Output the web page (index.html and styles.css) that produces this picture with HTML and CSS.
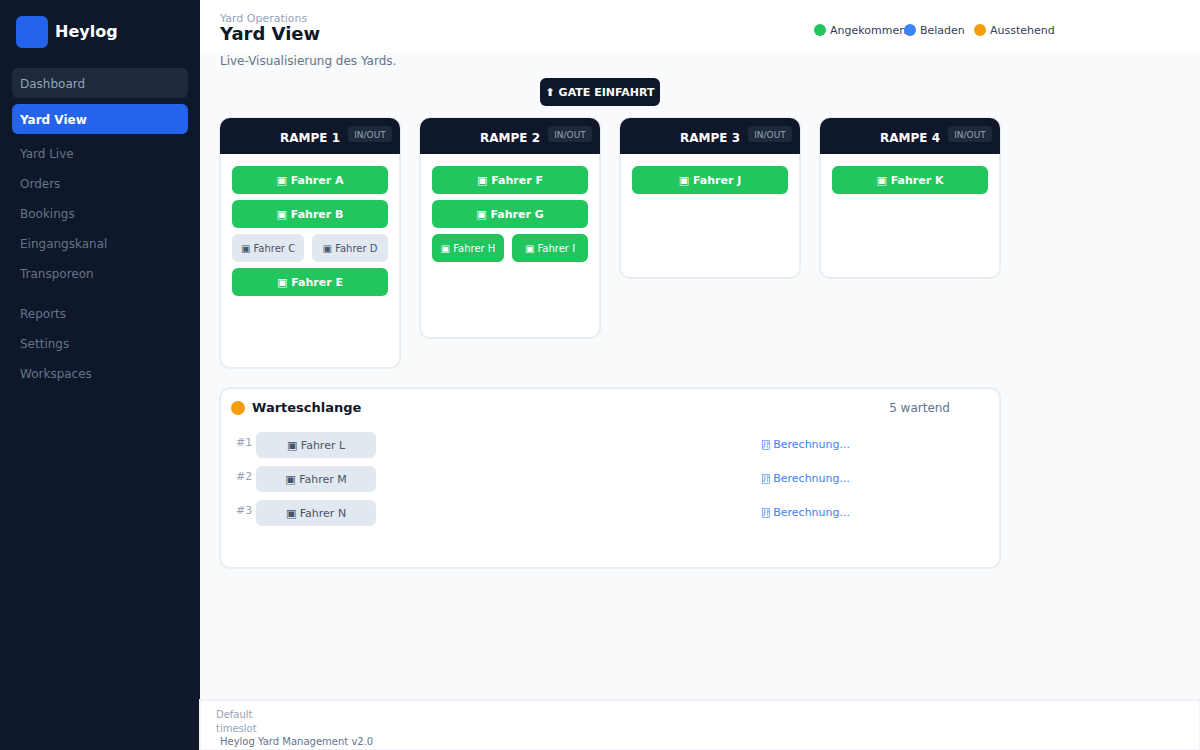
FILE: index.html
```
<!DOCTYPE html>
<html lang="de">
<head>
    <meta charset="UTF-8">
    <meta name="viewport" content="width=device-width, initial-scale=1.0">
    <title>Yard View</title>
    <link rel="stylesheet" href="styles.css">
</head>
<body>
    <aside class="sidebar">
        <div class="brand">
            <div class="logo"></div>
            <span>Heylog</span>
        </div>
        <nav>
            <div class="nav-main">
                <a class="nav-link hover" href="#">Dashboard</a>
                <a class="nav-link active" href="#">Yard View</a>
            </div>
            <div class="nav-group">
                <a class="nav-link" href="#">Yard Live</a>
                <a class="nav-link" href="#">Orders</a>
                <a class="nav-link" href="#">Bookings</a>
                <a class="nav-link" href="#">Eingangskanal</a>
                <a class="nav-link" href="#">Transporeon</a>
            </div>
            <div class="nav-group nav-bottom">
                <a class="nav-link" href="#">Reports</a>
                <a class="nav-link" href="#">Settings</a>
                <a class="nav-link" href="#">Workspaces</a>
            </div>
        </nav>
    </aside>
    <div class="page">
        <header class="header">
            <div>
                <div class="section">Yard Operations</div>
                <h1>Yard View</h1>
            </div>
            <div class="legend">
                <span class="legend-item wide"><i class="dot green"></i><span>Angekommen</span></span>
                <span class="legend-item"><i class="dot blue"></i><span>Beladen</span></span>
                <span class="legend-item last"><i class="dot orange"></i><span>Ausstehend</span></span>
            </div>
        </header>
        <main class="content">
            <p class="subtitle">Live-Visualisierung des Yards.</p>
            <div class="gate-row">
                <div class="gate">⬆ GATE EINFAHRT</div>
            </div>
            <div class="ramps">
                <section class="ramp large">
                    <div class="ramp-head">
                        <h2>RAMPE 1</h2>
                        <span class="badge">IN/OUT</span>
                    </div>
                    <div class="ramp-body">
                        <div class="driver arrived">▣ Fahrer A</div>
                        <div class="driver arrived">▣ Fahrer B</div>
                        <div class="pair">
                            <div class="driver small">▣ Fahrer C</div>
                            <div class="driver small">▣ Fahrer D</div>
                        </div>
                        <div class="driver arrived">▣ Fahrer E</div>
                    </div>
                </section>
                <section class="ramp medium">
                    <div class="ramp-head">
                        <h2>RAMPE 2</h2>
                        <span class="badge">IN/OUT</span>
                    </div>
                    <div class="ramp-body">
                        <div class="driver arrived">▣ Fahrer F</div>
                        <div class="driver arrived">▣ Fahrer G</div>
                        <div class="pair">
                            <div class="driver arrived small">▣ Fahrer H</div>
                            <div class="driver arrived small">▣ Fahrer I</div>
                        </div>
                    </div>
                </section>
                <section class="ramp">
                    <div class="ramp-head">
                        <h2>RAMPE 3</h2>
                        <span class="badge">IN/OUT</span>
                    </div>
                    <div class="ramp-body">
                        <div class="driver arrived">▣ Fahrer J</div>
                    </div>
                </section>
                <section class="ramp">
                    <div class="ramp-head">
                        <h2>RAMPE 4</h2>
                        <span class="badge">IN/OUT</span>
                    </div>
                    <div class="ramp-body">
                        <div class="driver arrived">▣ Fahrer K</div>
                    </div>
                </section>
            </div>
            <section class="queue">
                <div class="queue-head">
                    <i class="dot big orange"></i>
                    <h2>Warteschlange</h2>
                    <span class="count">5 wartend</span>
                </div>
                <svg width="0" height="0" class="defs">
                    <symbol id="box" viewBox="0 0 8 10">
                        <g fill="none" stroke="currentColor">
                            <rect x="0.5" y="0.5" width="7" height="9" stroke-width="0.6"/>
                            <path d="M1.8 2h1.4v1.1L1.8 4.4h1.6M4.7 2h1.5v2.4H4.7M5 3.2h1.2M2 8.3V5.7h1.4M2 6.9h1.2M4.8 5.9h.9v2.4" stroke-width="0.6"/>
                        </g>
                    </symbol>
                </svg>
                <div class="queue-list">
                    <div class="queue-row">
                        <span class="position">#1</span>
                        <div class="driver waiting">▣ Fahrer L</div>
                        <span class="eta"><svg width="8" height="10"><use href="#box"/></svg>Berechnung...</span>
                    </div>
                    <div class="queue-row">
                        <span class="position">#2</span>
                        <div class="driver waiting">▣ Fahrer M</div>
                        <span class="eta"><svg width="8" height="10"><use href="#box"/></svg>Berechnung...</span>
                    </div>
                    <div class="queue-row">
                        <span class="position">#3</span>
                        <div class="driver waiting">▣ Fahrer N</div>
                        <span class="eta"><svg width="8" height="10"><use href="#box"/></svg>Berechnung...</span>
                    </div>
                </div>
            </section>
        </main>
        <footer class="footer">
            <div class="timeslot">Default<br>timeslot</div>
            <div class="version">Heylog Yard Management v2.0</div>
        </footer>
    </div>
</body>
</html>
```
FILE: styles.css
```
* {
    box-sizing: border-box;
}
body {
    display: flex;
    min-height: 100vh;
    margin: 0;
    background-color: #f8fafc;
    font-family: "DejaVu Sans", sans-serif;
    font-size: 12px;
    color: #0f172a;
}
h1, h2, p {
    margin: 0;
}

/* sidebar */
.sidebar {
    flex: 0 0 200px;
    padding: 16px 12px;
    background-color: #0f172a;
}
.brand {
    display: flex;
    gap: 7px;
    padding-left: 4px;
    margin-bottom: 20px;
    color: white;
    font-size: 16px;
    font-weight: bold;
    line-height: 32px;
}
.logo {
    width: 32px;
    height: 32px;
    border-radius: 6px;
    background-color: #2563eb;
}
.nav-main {
    display: grid;
    gap: 6px;
}
.nav-group {
    margin-top: 5px;
}
.nav-bottom {
    margin-top: 10px;
}
.nav-link {
    display: block;
    padding: 0 8px;
    border-radius: 6px;
    line-height: 30px;
    color: #64748b;
    text-decoration: none;
}
.nav-main .nav-link {
    padding-top: 2px;
    line-height: 28px;
}
.nav-link.hover {
    background-color: #1e293b;
    color: #94a3b8;
}
.nav-link.active {
    background-color: #2563eb;
    color: white;
    font-weight: bold;
}

/* header */
.page {
    flex: 1;
    display: flex;
    flex-direction: column;
    min-width: 0;
}
.header {
    display: flex;
    justify-content: space-between;
    align-items: flex-start;
    padding: 13px 144px 9px 20px;
    background-color: white;
}
.section {
    font-size: 11px;
    line-height: 12px;
    color: #94a3b8;
}
h1 {
    font-size: 18px;
    line-height: 18px;
}
.legend {
    display: flex;
    padding-top: 6px;
}
.legend-item {
    display: flex;
    align-items: center;
    gap: 4px;
    width: 70px;
    font-size: 11px;
    line-height: 20px;
    color: #334155;
}
.legend-item span {
    padding-top: 2px;
}
.legend-item.wide {
    width: 90px;
}
.legend-item.last {
    width: 82px;
}
.dot {
    flex: none;
    width: 12px;
    height: 12px;
    border-radius: 50%;
}
.dot.big {
    width: 14px;
    height: 14px;
}
.green {
    background-color: #22c55e;
}
.blue {
    background-color: #3b82f6;
}
.orange {
    background-color: #f59e0b;
}

/* yard */
.content {
    flex: 1;
    width: 100%;
    max-width: 820px;
    padding: 0 20px 20px;
}
.subtitle {
    line-height: 18px;
    color: #64748b;
}
.gate-row {
    display: flex;
    justify-content: center;
    padding-right: 20px;
    margin: 8px 0 12px;
}
.gate {
    padding: 2px 6px 0;
    border-radius: 6px;
    background-color: #0f172a;
    color: white;
    font-size: 11px;
    font-weight: bold;
    line-height: 26px;
}
.ramps {
    display: grid;
    grid-template-columns: repeat(4, 1fr);
    align-items: start;
    gap: 20px;
    margin-bottom: 20px;
}
.ramp, .queue {
    border-radius: 10px;
    background-color: white;
    box-shadow: 0 0 0 1px #e8edf3, inset 0 0 0 1px #e8edf3;
}
.ramp {
    min-height: 160px;
}
.ramp.medium {
    min-height: 220px;
}
.ramp.large {
    min-height: 250px;
}
.ramp-head {
    position: relative;
    height: 36px;
    padding-top: 4px;
    border-radius: 10px 10px 0 0;
    background-color: #0f172a;
    color: white;
    text-align: center;
}
.ramp-head h2 {
    font-size: 12px;
    line-height: 32px;
}
.badge {
    position: absolute;
    top: 8px;
    right: 8px;
    width: 44px;
    padding-top: 2px;
    border-radius: 4px;
    background-color: #1e293b;
    color: #94a3b8;
    font-size: 9px;
    line-height: 14px;
}
.ramp-body {
    display: grid;
    gap: 6px;
    padding: 12px;
}
.pair {
    display: grid;
    grid-template-columns: 72fr 76fr;
    gap: 8px;
}
.driver {
    padding-top: 2px;
    border-radius: 6px;
    background-color: #e2e8f0;
    color: #475569;
    font-size: 11px;
    line-height: 26px;
    text-align: center;
    white-space: nowrap;
}
.driver.arrived {
    background-color: #22c55e;
    color: white;
    font-weight: bold;
}
.driver.small {
    font-size: 10px;
    font-weight: normal;
}
.driver.waiting {
    width: 120px;
    line-height: 24px;
}

/* queue */
.queue {
    min-height: 180px;
    padding: 10px 50px 20px 11px;
}
.queue-head {
    display: flex;
    align-items: center;
    gap: 7px;
    line-height: 20px;
}
.queue-head h2 {
    font-size: 13px;
}
.count {
    margin-left: auto;
    color: #64748b;
}
.defs {
    display: block;
}
.queue-list {
    display: grid;
    gap: 8px;
    padding: 14px 100px 0 5px;
}
.queue-row {
    display: flex;
    gap: 4px;
    height: 26px;
    font-size: 11px;
}
.position {
    width: 16px;
    line-height: 22px;
    color: #94a3b8;
}
.eta {
    display: flex;
    align-items: center;
    gap: 3px;
    margin-left: auto;
    line-height: 28px;
    color: #3b82f6;
}

/* footer */
.footer {
    padding: 8px 16px 2px;
    background-color: white;
    box-shadow: 0 0 0 1px #f0f3f8, inset 0 0 0 1px #f0f3f8;
    font-size: 10px;
}
.timeslot {
    line-height: 14px;
    color: #94a3b8;
}
.version {
    padding-left: 4px;
    line-height: 12px;
    color: #64748b;
}
```
